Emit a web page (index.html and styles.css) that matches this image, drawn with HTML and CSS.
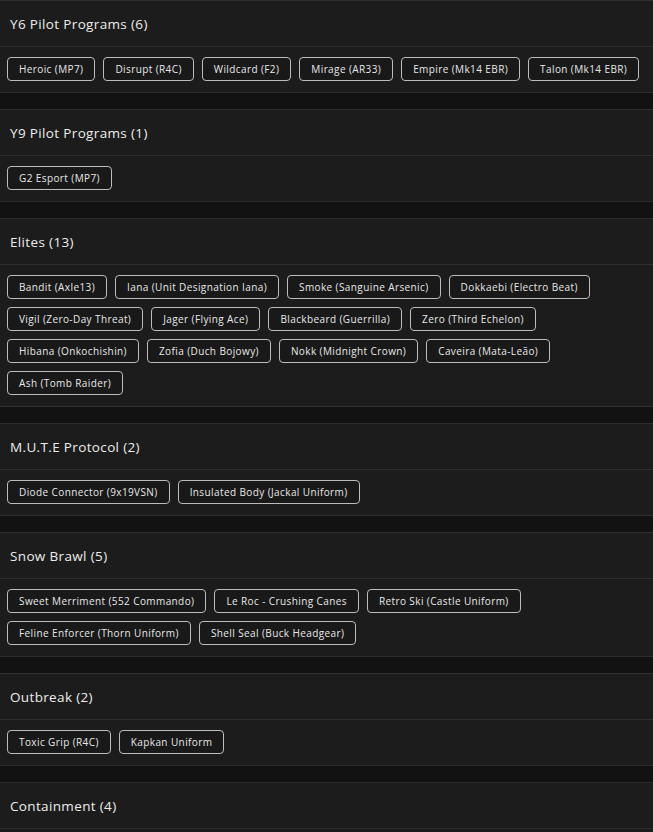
FILE: index.html
```html
<!DOCTYPE html>
<html lang="en">
<head>
<meta charset="utf-8">
<title>Collections</title>
<link rel="stylesheet" href="styles.css">
</head>
<body>
<div class="list">
  <section class="card">
    <h2 class="card-title">Y6 Pilot Programs (6)</h2>
    <div class="chips">
      <span class="chip">Heroic (MP7)</span>
      <span class="chip">Disrupt (R4C)</span>
      <span class="chip">Wildcard (F2)</span>
      <span class="chip">Mirage (AR33)</span>
      <span class="chip">Empire (Mk14 EBR)</span>
      <span class="chip">Talon (Mk14 EBR)</span>
    </div>
  </section>
  <section class="card">
    <h2 class="card-title">Y9 Pilot Programs (1)</h2>
    <div class="chips">
      <span class="chip">G2 Esport (MP7)</span>
    </div>
  </section>
  <section class="card">
    <h2 class="card-title">Elites (13)</h2>
    <div class="chips">
      <span class="chip">Bandit (Axle13)</span>
      <span class="chip">Iana (Unit Designation Iana)</span>
      <span class="chip">Smoke (Sanguine Arsenic)</span>
      <span class="chip">Dokkaebi (Electro Beat)</span>
      <span class="chip">Vigil (Zero-Day Threat)</span>
      <span class="chip">Jager (Flying Ace)</span>
      <span class="chip">Blackbeard (Guerrilla)</span>
      <span class="chip">Zero (Third Echelon)</span>
      <span class="chip">Hibana (Onkochishin)</span>
      <span class="chip">Zofia (Duch Bojowy)</span>
      <span class="chip">Nokk (Midnight Crown)</span>
      <span class="chip">Caveira (Mata-Leão)</span>
      <span class="chip">Ash (Tomb Raider)</span>
    </div>
  </section>
  <section class="card">
    <h2 class="card-title">M.U.T.E Protocol (2)</h2>
    <div class="chips">
      <span class="chip">Diode Connector (9x19VSN)</span>
      <span class="chip">Insulated Body (Jackal Uniform)</span>
    </div>
  </section>
  <section class="card">
    <h2 class="card-title">Snow Brawl (5)</h2>
    <div class="chips">
      <span class="chip">Sweet Merriment (552 Commando)</span>
      <span class="chip">Le Roc - Crushing Canes</span>
      <span class="chip">Retro Ski (Castle Uniform)</span>
      <span class="chip">Feline Enforcer (Thorn Uniform)</span>
      <span class="chip">Shell Seal (Buck Headgear)</span>
    </div>
  </section>
  <section class="card">
    <h2 class="card-title">Outbreak (2)</h2>
    <div class="chips">
      <span class="chip">Toxic Grip (R4C)</span>
      <span class="chip">Kapkan Uniform</span>
    </div>
  </section>
  <section class="card">
    <h2 class="card-title">Containment (4)</h2>
    <div class="chips chips-empty"></div>
  </section>
</div>
</body>
</html>
```

FILE: styles.css
```css
* { box-sizing: border-box; }

html, body {
  margin: 0;
  padding: 0;
  background: #121212;
}

body {
  font-family: "Open Sans", "Liberation Sans", sans-serif;
  color: #e6e6e6;
}

.list {
  display: flex;
  flex-direction: column;
  gap: 16px;
}

.card {
  background: #1c1c1c;
  border-top: 1px solid #2c2c2c;
  border-bottom: 1px solid #2c2c2c;
}

.card-title {
  margin: 0;
  height: 46px;
  padding: 0 10px;
  display: flex;
  align-items: center;
  font-size: 13.5px;
  font-weight: 400;
  letter-spacing: 0.35px;
  color: #ececec;
  border-bottom: 1px solid #2c2c2c;
}

.chips {
  display: flex;
  flex-wrap: wrap;
  gap: 8px;
  padding: 10px 7px 11px;
}

.chips-empty { min-height: 45px; }

.chip {
  display: inline-flex;
  align-items: center;
  height: 24px;
  padding: 0 11px;
  border: 1px solid #bcbcbc;
  border-radius: 4px;
  background: #191919;
  font-size: 10px;
  letter-spacing: 0.4px;
  color: #e8e8e8;
  white-space: nowrap;
}
```
